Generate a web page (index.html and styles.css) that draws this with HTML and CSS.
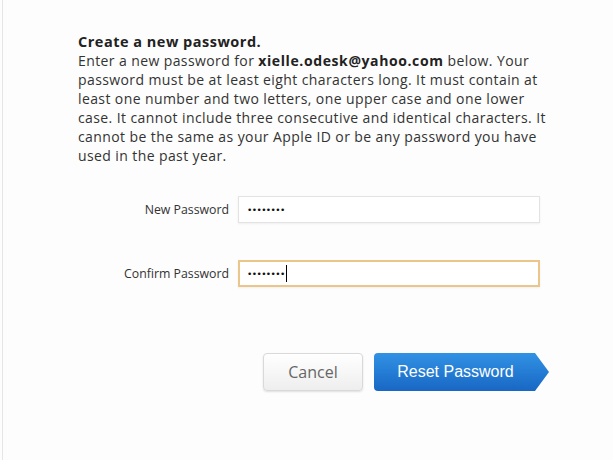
FILE: index.html
```html
<!DOCTYPE html>
<html>
<head>
<meta charset="utf-8">
<link rel="stylesheet" href="styles.css">
</head>
<body>
<div class="page">
  <div class="content">
    <h1 class="title">Create a new password.</h1>
    <p class="intro">Enter a new password for <b>xielle.odesk@yahoo.com</b> below. Your password must be at least eight characters long. It must contain at least one number and two letters, one upper case and one lower case. It cannot include three consecutive and identical characters. It cannot be the same as your Apple ID or be any password you have used in the past year.</p>
    <div class="form">
      <div class="row">
        <label class="label">New Password</label>
        <div class="field"><span class="dots">&#8226;&#8226;&#8226;&#8226;&#8226;&#8226;&#8226;&#8226;</span></div>
      </div>
      <div class="row">
        <label class="label">Confirm Password</label>
        <div class="field focused"><span class="dots">&#8226;&#8226;&#8226;&#8226;&#8226;&#8226;&#8226;&#8226;</span><span class="caret"></span></div>
      </div>
    </div>
    <div class="actions">
      <button class="btn cancel">Cancel</button>
      <button class="btn reset">Reset Password</button>
    </div>
  </div>
</div>
</body>
</html>
```
FILE: styles.css
```css
html, body {
  margin: 0;
  padding: 0;
  background: #fdfdfd;
}
.page {
  height: 460px;
  margin-left: 2px;
  border-left: 1px solid #e6e6e6;
  box-sizing: border-box;
  padding: 32px 0 0 75px;
}
.content {
  width: 471px;
}
.title {
  margin: 0;
  font-family: "Open Sans", sans-serif;
  font-weight: 700;
  font-size: 14.5px;
  letter-spacing: 0.5px;
  line-height: 19px;
  color: #222;
}
.intro {
  margin: 0;
  font-family: "Open Sans", sans-serif;
  font-size: 14px;
  letter-spacing: 0.4px;
  line-height: 19px;
  color: #333;
}
.intro b { color: #222; letter-spacing: 0.6px; }
.form {
  margin-top: 31px;
  display: flex;
  flex-direction: column;
  gap: 37px;
}
.row {
  display: flex;
  align-items: center;
}
.label {
  width: 160px;
  padding-right: 9px;
  box-sizing: border-box;
  text-align: right;
  font-family: "Open Sans", sans-serif;
  font-size: 12.3px;
  color: #333;
}
.field {
  width: 302px;
  height: 27px;
  box-sizing: border-box;
  border: 1px solid #e3e3e3;
  background: #fff;
  box-shadow: 0 1px 2px rgba(0,0,0,0.06);
  display: flex;
  align-items: center;
  padding-left: 8px;
}
.field.focused {
  border: 2px solid #eac68a;
  padding-left: 7px;
}
.dots {
  font-family: "DejaVu Sans", sans-serif;
  font-size: 9px;
  letter-spacing: -0.6px;
  color: #111;
}
.caret {
  display: inline-block;
  width: 1px;
  height: 17px;
  margin-left: 1px;
  background: #000;
}
.actions {
  margin-top: 66px;
  margin-left: 185px;
  display: flex;
  gap: 11px;
  align-items: center;
}
.btn {
  height: 38px;
  border-radius: 4px;
  font-size: 16px;
  cursor: pointer;
}
.cancel {
  width: 101px;
  border: 1px solid #d9d9d9;
  background: linear-gradient(#ffffff, #eeeeee);
  box-shadow: 0 1px 2px rgba(0,0,0,0.12);
  font-family: "Open Sans", sans-serif;
  color: #666;
}
.reset {
  width: 177px;
  border: none;
  border-radius: 4px 0 0 4px;
  padding: 0 12px 0 0;
  background: linear-gradient(#3192e4, #1867c4);
  clip-path: polygon(0 0, 92% 0, 100% 50%, 92% 100%, 0 100%);
  font-family: "Liberation Sans", sans-serif;
  color: #fff;
}
```
